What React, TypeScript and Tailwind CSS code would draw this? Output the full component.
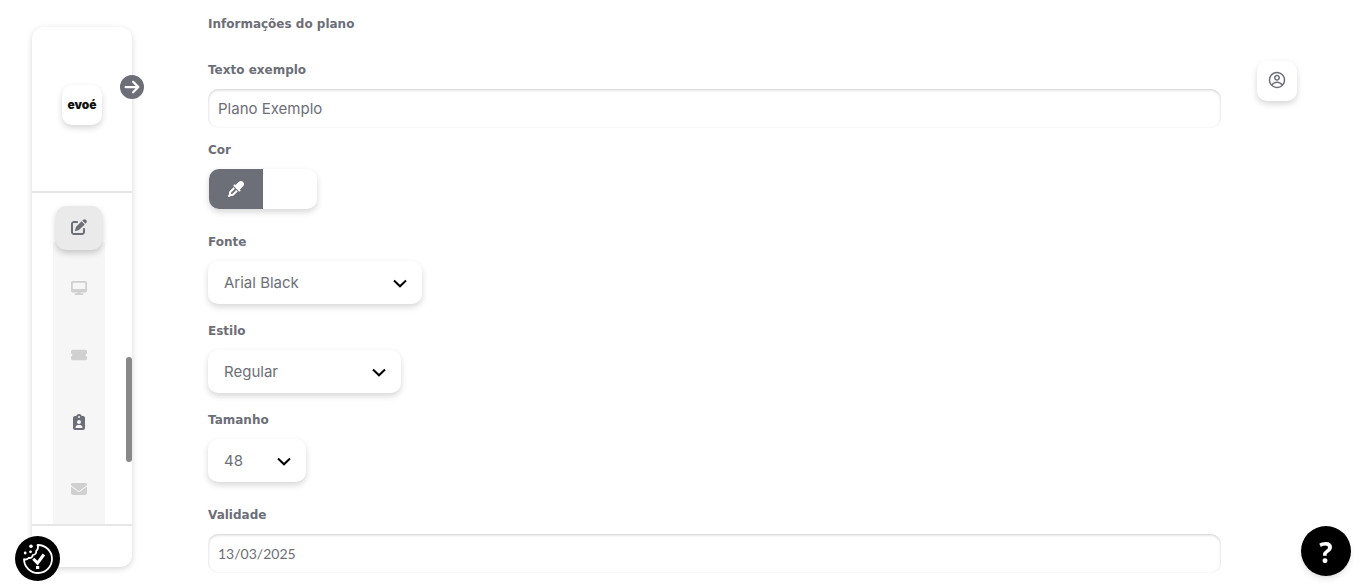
import { useState } from "react";
import type { ReactNode } from "react";
import clsx from "clsx";
import { CgProfile } from "react-icons/cg";
import {
  FaCircleArrowRight,
  FaClipboardUser,
  FaDesktop,
  FaEnvelope,
  FaEyeDropper,
  FaPenToSquare,
  FaTicketSimple,
} from "react-icons/fa6";

const CARD_SHADOW = "shadow-[0_3px_6px_rgba(0,0,0,0.16)]";
const LABEL_TEXT = "font-['DejaVu_Sans',sans-serif] text-xs leading-5 font-bold";

const NAV_ITEMS = [
  { label: "Monitor", icon: FaDesktop, enabled: false },
  { label: "Ingressos", icon: FaTicketSimple, enabled: false },
  { label: "Planos", icon: FaClipboardUser, enabled: true },
  { label: "Mensagens", icon: FaEnvelope, enabled: false },
];

function Sidebar() {
  return (
    <aside className="sticky top-0 h-screen w-[100px] shrink-0 pt-[27px] pb-[21px]">
      <div className="relative flex h-full flex-col rounded-xl bg-white shadow-[0_2px_6px_rgba(0,0,0,0.16)]">
        <div className="flex h-[166px] shrink-0 justify-center border-b-2 border-[#e6e6e6] pt-[58px]">
          <a
            href="#"
            className={clsx(
              "flex h-10 w-10 items-center justify-center rounded-[10px] bg-white text-xs font-black text-[#111]",
              CARD_SHADOW,
            )}
          >
            evoé
          </a>
        </div>

        <nav className="flex min-h-0 flex-1 flex-col items-center overflow-hidden pr-[6px] pt-[13px]">
          <button
            type="button"
            aria-label="Editar"
            className="z-10 flex h-11 w-[46px] shrink-0 items-center justify-center rounded-[10px] bg-[#eaeaea] pb-0.5 text-[#6c6e78] shadow-[0_3px_6px_rgba(0,0,0,0.2)]"
          >
            <FaPenToSquare className="h-4 w-4" />
          </button>
          <div className="-mt-2 flex w-[52px] flex-1 flex-col items-center bg-[#f6f6f6] pt-3">
            {NAV_ITEMS.map(({ label, icon: Icon, enabled }) => (
              <button
                key={label}
                type="button"
                aria-label={label}
                disabled={!enabled}
                className={clsx(
                  "flex h-[67px] w-full shrink-0 items-center justify-center",
                  enabled ? "text-[#6c6e78]" : "text-[#d0d0d0]",
                )}
              >
                <Icon className="h-4 w-4" />
              </button>
            ))}
          </div>
        </nav>

        <div className="h-[43px] shrink-0 border-t-2 border-[#e6e6e6]" />

        <div className="absolute top-[330px] right-0 h-[105px] w-[6px] rounded-full bg-[#888]" />
        <button
          type="button"
          aria-label="Expandir menu"
          className="absolute top-12 -right-3 rounded-full bg-white text-[#6c6e78]"
        >
          <FaCircleArrowRight className="h-6 w-6" />
        </button>
      </div>
    </aside>
  );
}

function Field({ id, label, children }: { id: string; label: string; children: ReactNode }) {
  return (
    <div className="flex flex-col items-start gap-[9px]">
      <label htmlFor={id} className={LABEL_TEXT}>
        {label}
      </label>
      {children}
    </div>
  );
}

function TextField({ id, label, initial, small }: { id: string; label: string; initial: string; small?: boolean }) {
  const [value, setValue] = useState(initial);

  return (
    <Field id={id} label={label}>
      <input
        id={id}
        type="text"
        value={value}
        onChange={(e) => setValue(e.target.value)}
        className={clsx(
          "h-[39px] w-full rounded-[10px] bg-white px-[10px] shadow-[inset_0_1px_3px_rgba(0,0,0,0.2)] outline-none",
          small ? "font-['Lato',sans-serif] text-sm" : "text-[15px]",
        )}
      />
    </Field>
  );
}

type SelectFieldProps = {
  id: string;
  label: string;
  options: string[];
  width: string;
};

function SelectField({ id, label, options, width }: SelectFieldProps) {
  const [value, setValue] = useState(options[0]);

  return (
    <Field id={id} label={label}>
      <div className={clsx("relative", width)}>
        <select
          id={id}
          value={value}
          onChange={(e) => setValue(e.target.value)}
          className={clsx(
            "h-[43px] w-full appearance-none rounded-[10px] bg-white px-4 pt-0.5 text-[15px] outline-none",
            CARD_SHADOW,
          )}
        >
          {options.map((o) => (
            <option key={o}>{o}</option>
          ))}
        </select>
        <svg
          viewBox="0 0 14 9"
          className="pointer-events-none absolute top-[18px] right-[15px] h-[9px] w-[14px] fill-none stroke-black stroke-2"
        >
          <path d="M1 1.5 7 7.3 13 1.5" />
        </svg>
      </div>
    </Field>
  );
}

function ColorField() {
  return (
    <Field id="cor" label="Cor">
      <div className={clsx("ml-px flex h-10 w-[108px] overflow-hidden rounded-[10px] bg-white", CARD_SHADOW)}>
        <button
          id="cor"
          type="button"
          className="flex w-1/2 items-center justify-center bg-[#6c6e78] text-white"
        >
          <FaEyeDropper className="h-4 w-4" />
        </button>
      </div>
    </Field>
  );
}

function CookieIcon() {
  return (
    <svg viewBox="0 0 45 45" className="h-full w-full" fill="none" stroke="white">
      <path
        d="M22.5 9A14 14 0 1 1 9 23.2c2 .6 3.8.1 4.6-1.3 2.3.4 4-.8 4.1-2.8 2.5-.3 3.9-1.9 3.5-4.2 1.7-1.3 2.2-3.4 1.3-5.9Z"
        strokeWidth="1.8"
        strokeLinejoin="round"
      />
      <path d="m18.3 22.7 4.2 4.4 6.4-8.6" strokeWidth="3" />
      <g fill="white" stroke="none">
        <circle cx="16" cy="10.3" r="1.8" />
        <circle cx="10.2" cy="17" r="1.4" />
        <circle cx="15.5" cy="15.8" r="1.4" />
        <rect x="21" y="30" width="3.2" height="3" />
      </g>
    </svg>
  );
}

export default function App() {
  return (
    <div className="flex min-h-screen bg-white pl-8 font-['Inter',sans-serif] text-[#6c6e78]">
      <Sidebar />

      <main className="flex-1 pt-[14px] pb-4 pl-[76px]">
        <h1 className={LABEL_TEXT}>Informações do plano</h1>
        <form className="mt-[26px] flex flex-col">
          <TextField id="texto" label="Texto exemplo" initial="Plano Exemplo" />
          <div className="mt-3">
            <ColorField />
          </div>
          <div className="mt-[23px] flex flex-col gap-[17px]">
            <SelectField id="fonte" label="Fonte" options={["Arial Black", "Arial", "Verdana"]} width="w-[214px]" />
            <SelectField id="estilo" label="Estilo" options={["Regular", "Negrito", "Itálico"]} width="w-[193px]" />
            <SelectField id="tamanho" label="Tamanho" options={["48", "36", "24"]} width="w-[98px]" />
          </div>
          <div className="mt-[23px]">
            <TextField id="validade" label="Validade" initial="13/03/2025" small />
          </div>
        </form>
      </main>

      <div className="w-[139px] shrink-0 pt-[61px] pl-9">
        <button
          type="button"
          aria-label="Perfil"
          className={clsx("flex h-10 w-10 items-center justify-center rounded-[10px] bg-white pb-0.5", CARD_SHADOW)}
        >
          <CgProfile className="h-[18px] w-[18px]" />
        </button>
      </div>

      <button
        type="button"
        aria-label="Preferências de cookies"
        className="fixed bottom-[7px] left-[15px] z-20 h-[45px] w-[45px] rounded-full bg-black"
      >
        <CookieIcon />
      </button>
      <button
        type="button"
        className="fixed right-[9px] bottom-3 z-20 flex h-[50px] w-[50px] items-center justify-center rounded-full bg-black pt-0.5 font-['Open_Sans',sans-serif] text-[28px] font-bold text-white shadow-md"
      >
        ?
      </button>
    </div>
  );
}
